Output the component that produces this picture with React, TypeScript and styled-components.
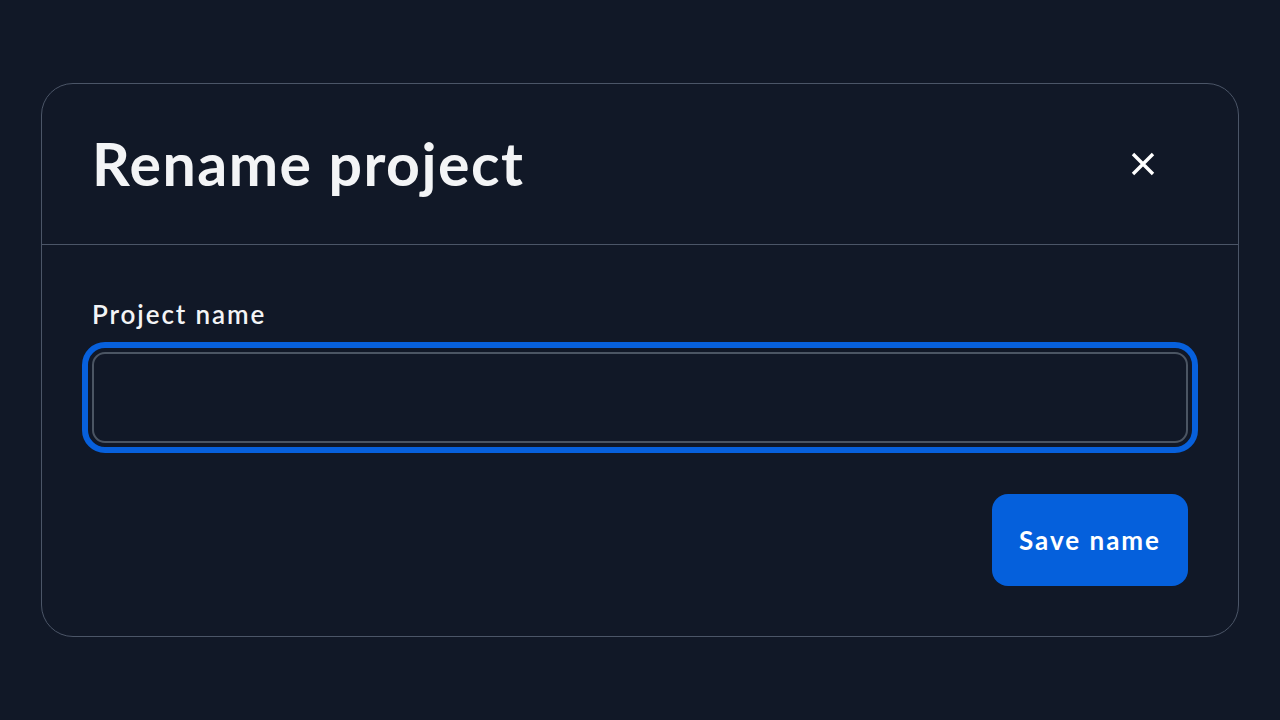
import React from "react";
import styled, { createGlobalStyle } from "styled-components";

const Global = createGlobalStyle`
  html, body { margin: 0; padding: 0; background: #111827; }
  body { font-family: "Lato", "Noto Sans", sans-serif; -webkit-font-smoothing: antialiased; }
  * { box-sizing: border-box; }
`;

const Page = styled.div`
  width: 1280px;
  height: 720px;
  display: flex;
  justify-content: center;
  padding-top: 83px;
`;

const Card = styled.div`
  width: 1198px;
  height: 554px;
  border: 1.5px solid #4b5567;
  border-radius: 32px;
  background: #111827;
  display: flex;
  flex-direction: column;
`;

const Header = styled.div`
  display: flex;
  align-items: center;
  justify-content: space-between;
  padding: 48px 48px 48px 50px;
  border-bottom: 1.5px solid #4b5567;
`;

const Title = styled.h1`
  margin: 0;
  font-size: 59px;
  line-height: 64px;
  font-weight: 700;
  color: #f3f4f6;
  letter-spacing: 1.5px;
`;

const CloseButton = styled.button`
  width: 64px;
  height: 64px;
  margin-right: 15px;
  border: none;
  background: transparent;
  display: flex;
  align-items: center;
  justify-content: center;
  padding: 0;
  cursor: pointer;
`;

const Body = styled.div`
  display: flex;
  flex-direction: column;
  padding: 52px 50px 0 50px;
`;

const Label = styled.label`
  font-size: 26px;
  line-height: 34px;
  font-weight: 600;
  color: #f3f4f6;
  letter-spacing: 1.9px;
`;

const Input = styled.input`
  margin-top: 21px;
  height: 91px;
  width: 100%;
  background: #111827;
  border: 2px solid #4b5563;
  border-radius: 13px;
  outline: 6px solid #0760dc;
  outline-offset: 4px;
  color: #f3f4f6;
  font-size: 24px;
  padding: 0 20px;
  font-family: inherit;
`;

const Actions = styled.div`
  display: flex;
  justify-content: flex-end;
  margin-top: 51px;
`;

const PrimaryButton = styled.button`
  width: 196px;
  height: 92px;
  border: none;
  border-radius: 16px;
  background: #0560dc;
  color: #ffffff;
  font-family: inherit;
  font-size: 26px;
  font-weight: 700;
  letter-spacing: 2px;
  padding: 0;
`;

export default function App() {
  return (
    <>
      <Global />
      <Page>
        <Card>
          <Header>
            <Title>Rename project</Title>
            <CloseButton aria-label="Close">
              <svg width="24" height="24" viewBox="0 0 24 24" fill="none" stroke="#ffffff" strokeWidth="3.4" strokeLinecap="butt">
                <path d="M2 2L22 22M22 2L2 22" />
              </svg>
            </CloseButton>
          </Header>
          <Body>
            <Label htmlFor="pname">Project name</Label>
            <Input id="pname" />
            <Actions>
              <PrimaryButton>Save name</PrimaryButton>
            </Actions>
          </Body>
        </Card>
      </Page>
    </>
  );
}
